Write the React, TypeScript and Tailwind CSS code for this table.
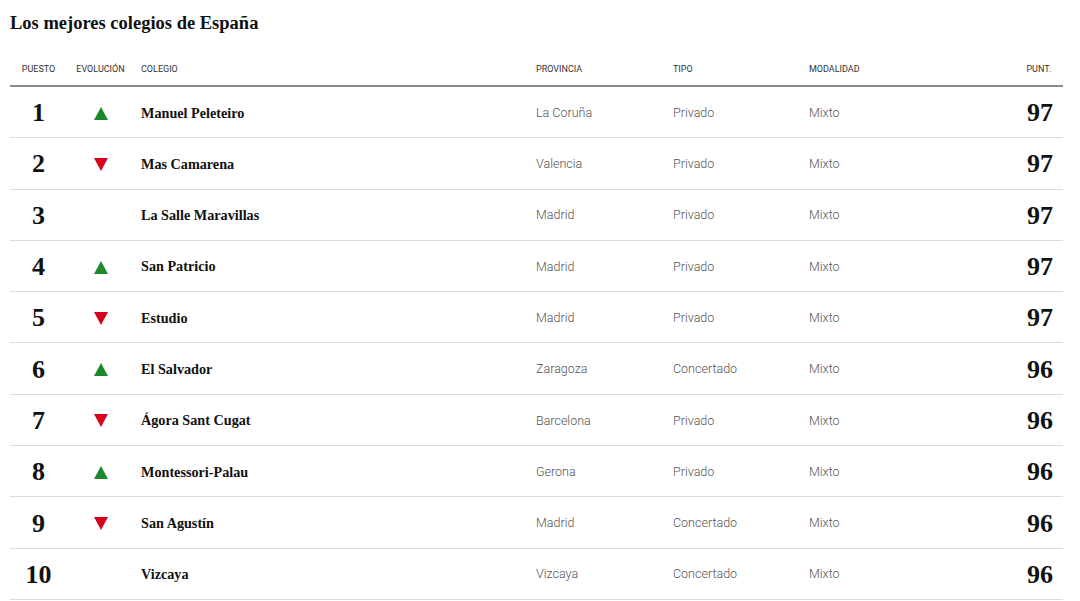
const rows = [
  { pos: 1, evo: "up", name: "Manuel Peleteiro", prov: "La Coruña", tipo: "Privado", mod: "Mixto", punt: 97 },
  { pos: 2, evo: "down", name: "Mas Camarena", prov: "Valencia", tipo: "Privado", mod: "Mixto", punt: 97 },
  { pos: 3, evo: "", name: "La Salle Maravillas", prov: "Madrid", tipo: "Privado", mod: "Mixto", punt: 97 },
  { pos: 4, evo: "up", name: "San Patricio", prov: "Madrid", tipo: "Privado", mod: "Mixto", punt: 97 },
  { pos: 5, evo: "down", name: "Estudio", prov: "Madrid", tipo: "Privado", mod: "Mixto", punt: 97 },
  { pos: 6, evo: "up", name: "El Salvador", prov: "Zaragoza", tipo: "Concertado", mod: "Mixto", punt: 96 },
  { pos: 7, evo: "down", name: "Ágora Sant Cugat", prov: "Barcelona", tipo: "Privado", mod: "Mixto", punt: 96 },
  { pos: 8, evo: "up", name: "Montessori-Palau", prov: "Gerona", tipo: "Privado", mod: "Mixto", punt: 96 },
  { pos: 9, evo: "down", name: "San Agustín", prov: "Madrid", tipo: "Concertado", mod: "Mixto", punt: 96 },
  { pos: 10, evo: "", name: "Vizcaya", prov: "Vizcaya", tipo: "Concertado", mod: "Mixto", punt: 96 },
];

const cols = "grid grid-cols-[57px_67px_395px_137px_136px_148px_113px]";
const serif = "font-['Liberation_Serif',serif]";
const sans = "font-['Roboto','Liberation_Sans',sans-serif]";

function Arrow({ dir }: { dir: string }) {
  if (dir === "up")
    return (
      <svg width="14" height="13" viewBox="0 0 14 13">
        <polygon points="7,0 14,13 0,13" fill="#1c8a2c" />
      </svg>
    );
  if (dir === "down")
    return (
      <svg width="14" height="13" viewBox="0 0 14 13">
        <polygon points="0,0 14,0 7,13" fill="#d9021c" />
      </svg>
    );
  return null;
}

export default function App() {
  return (
    <div className="bg-white w-[1080px] h-[601px] overflow-hidden text-[#111]">
      <div className="px-[10px] pt-[12px]">
        <h1 className={`${serif} font-bold text-[18.5px] leading-[23px]`}>
          Los mejores colegios de España
        </h1>
        <div className="mt-[20px] w-[1053px]">
          <div className={`${cols} ${sans} h-[32px] items-center text-[9px] text-[#333] uppercase border-b-2 border-[#8a8a8a] pt-[1px] pb-[2px]`}>
            <div className="text-center">Puesto</div>
            <div className="text-center">Evolución</div>
            <div className="pl-[7px]">Colegio</div>
            <div className="pl-[7px]">Provincia</div>
            <div className="pl-[7px]">Tipo</div>
            <div className="pl-[7px]">Modalidad</div>
            <div className="text-right pr-[12px]">Punt.</div>
          </div>
          {rows.map((r) => (
            <div key={r.pos} className={`${cols} h-[51.3px] items-center border-b border-[#dcdcdc] pt-[2px]`}>
              <div className={`${serif} font-bold text-[26px] text-center leading-none`}>{r.pos}</div>
              <div className="flex justify-center">
                <Arrow dir={r.evo} />
              </div>
              <div className={`${serif} font-bold text-[14.2px] pl-[7px]`}>{r.name}</div>
              <div className={`${sans} font-light text-[12.5px] text-[#555] pl-[7px]`}>{r.prov}</div>
              <div className={`${sans} font-light text-[12.5px] text-[#555] pl-[7px]`}>{r.tipo}</div>
              <div className={`${sans} font-light text-[12.5px] text-[#555] pl-[7px]`}>{r.mod}</div>
              <div className={`${serif} font-bold text-[26px] text-right pr-[10px] leading-none`}>{r.punt}</div>
            </div>
          ))}
        </div>
      </div>
    </div>
  );
}
